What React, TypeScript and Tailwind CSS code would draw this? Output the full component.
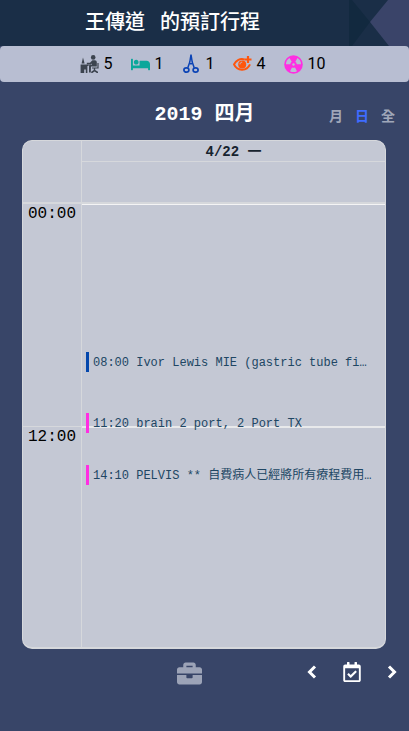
import type { ReactNode } from "react";
import { FaBed, FaBriefcase, FaRegCalendarCheck } from "react-icons/fa";

const MONO = "font-['Liberation_Mono','Noto_Sans_CJK_TC',monospace]";

function ClinicIcon() {
  return (
    <svg width="19" height="19" viewBox="0 0 19 19" fill="currentColor" aria-hidden="true">
      <circle cx="13.2" cy="2.4" r="2.3" />
      <path d="M12.4 5.2h2.4c1.2 0 2 .8 2 2v4.4H11l-.2 5.8H9V11c0-.8.5-1.3 1.2-1.3h1.6V8.4L10.600 9.400H6.800V7.800H10z" />
      <path d="M.6 9.400h8v1.500H7.400V18H5.800v-3.400H4.200V18H.6z" />
      <path d="M1.600 8.600 3 2.600l1.600 6z" />
      <path d="M17.400 8h1.200v5.400h-3.400V15l2.800 1.800V18h-1.200l-2.200-1.400L12.400 18h-1.200v-1.200L13.800 15v-1.600H12v-1h5.400z" />
    </svg>
  );
}

function ScissorsIcon() {
  return (
    <svg width="16" height="20" viewBox="0 0 16 20" fill="none" stroke="currentColor" aria-hidden="true">
      <path d="M8 .5 6.800 8l-2 5.800M8 .5 9.200 8l2 5.800M7 9.800h2" strokeWidth="1.500" />
      <ellipse cx="3.400" cy="16" rx="2.500" ry="2.200" strokeWidth="1.700" />
      <ellipse cx="12.600" cy="16" rx="2.500" ry="2.200" strokeWidth="1.700" />
    </svg>
  );
}

function EyePlusIcon() {
  return (
    <svg width="19" height="16" viewBox="0 0 19 16" fill="none" stroke="currentColor" aria-hidden="true">
      <path d="M11.600 3.600C7.200 2 3 4.400 1 8.400c3 6.600 12.600 7.400 16 0" strokeWidth="2" />
      <circle cx="9.200" cy="8.400" r="4" fill="currentColor" stroke="none" />
      <path d="M7 8.400c0-1.400.9-2.200 2.200-2.200" stroke="#b8bed2" strokeWidth="1" />
      <path d="M15 0v7M11.500 3.500h7" strokeWidth="2.200" />
    </svg>
  );
}

function RadiationIcon() {
  return (
    <svg width="19" height="19" viewBox="0 0 19 19" aria-hidden="true">
      <circle cx="9.500" cy="9.500" r="9.300" fill="currentColor" />
      <g fill="#b8bed2">
        <path id="blade" d="M8 12.400 6 16.200a7.600 7.600 0 0 0 7 0l-2-3.800a3.200 3.200 0 0 1-3 0z" />
        <use href="#blade" transform="rotate(120 9.5 9.5)" />
        <use href="#blade" transform="rotate(240 9.5 9.5)" />
        <circle cx="9.500" cy="9.500" r="1.200" />
      </g>
    </svg>
  );
}

function Chevron({ flip = false }: { flip?: boolean }) {
  return (
    <svg width="10" height="14" viewBox="0 0 10 14" fill="none" stroke="currentColor" strokeWidth="3" aria-hidden="true">
      <path d={flip ? "M2 1.500 7.500 7 2 12.500" : "M8 1.500 2.500 7 8 12.500"} />
    </svg>
  );
}

const counts: { name: string; value: number; color: string; icon: ReactNode }[] = [
  { name: "clinic", value: 5, color: "text-[#3c444f]", icon: <ClinicIcon /> },
  { name: "ward", value: 1, color: "text-[#0aa79b]", icon: <FaBed size={19} /> },
  { name: "surgery", value: 1, color: "text-[#0b43b5]", icon: <ScissorsIcon /> },
  { name: "exam", value: 4, color: "text-[#ff560d]", icon: <EyePlusIcon /> },
  { name: "radiology", value: 10, color: "text-[#ff2ee2]", icon: <RadiationIcon /> },
];

const events = [
  { time: "08:00", minutes: 480, title: "Ivor Lewis MIE (gastric tube fi…", bar: "border-[#0447ac]" },
  { time: "11:20", minutes: 680, title: "brain 2 port, 2 Port TX", bar: "border-[#ff2ee2]" },
  { time: "14:10", minutes: 850, title: "PELVIS ** 自費病人已經將所有療程費用…", bar: "border-[#ff2ee2]" },
];

const views = [
  { label: "月", active: false },
  { label: "日", active: true },
  { label: "全", active: false },
];

function Header() {
  return (
    <header className="relative flex h-[46px] items-center justify-center bg-[#1a2e47] pr-16">
      <svg className="absolute top-0 right-0" width="60" height="46" viewBox="0 0 60 46" aria-hidden="true">
        <path d="M0 0h3l18 22L3 46H0z" fill="#12293f" />
        <path d="M39 0h21v46H40L21 22z" fill="#3a4469" />
      </svg>
      <h1 className="relative flex gap-[15px] pb-1 text-xl leading-7 font-medium text-white">
        <span>王傳道</span>
        <span>的預訂行程</span>
      </h1>
    </header>
  );
}

function Summary() {
  return (
    <ul className="flex h-9 items-center justify-center gap-[18px] rounded bg-[#b8bed2] pr-1 font-[Roboto,sans-serif] text-base text-black">
      {counts.map((c) => (
        <li key={c.name} className="flex items-center gap-[5px]">
          <span className={`flex w-[19px] justify-center ${c.color}`}>{c.icon}</span>
          <span>{c.value}</span>
        </li>
      ))}
    </ul>
  );
}

function DayCalendar() {
  return (
    <section className={`mr-[23px] ml-[22px] overflow-hidden rounded-[10px] border border-b-2 border-[#d6d8dc] bg-[#c4c8d4] ${MONO}`}>
      <div className="grid h-[63px] grid-cols-[59px_1fr] border-b-2 border-[#d6d8dc]">
        <div className="border-r border-[#d6d8dc]" />
        <div>
          <h3 className="h-[21px] border-b border-[#d6d8dc] text-center text-sm leading-[22px] font-bold text-[#17232e]">
            4/22 一
          </h3>
        </div>
      </div>
      <div className="grid h-[443px] grid-cols-[59px_1fr]">
        <div className="grid grid-rows-2 border-r border-[#d6d8dc] text-center text-base leading-5 text-black">
          <div>00:00</div>
          <div className="border-t border-[#d6d8dc]">12:00</div>
        </div>
        <div className="relative grid grid-rows-2">
          <div className="border-t border-[#f4f4f5]" />
          <div className="border-t-2 border-[#e8e9eb]" />
          {events.map((e) => (
            <button
              key={e.time}
              type="button"
              style={{ top: `${(e.minutes / 1440) * 100}%` }}
              className={`absolute right-2 left-1 h-5 truncate border-l-3 pl-1 text-left text-xs leading-[22px] text-[#204663] ${e.bar}`}
            >
              {e.time} {e.title}
            </button>
          ))}
        </div>
      </div>
    </section>
  );
}

function Footer() {
  return (
    <footer className="grid grid-cols-[1fr_auto_1fr] items-center px-3 pt-3">
      <span />
      <button type="button" aria-label="Briefcase" className="mr-[30px] text-[#9ca3b7]">
        <FaBriefcase size={25} />
      </button>
      <div className="flex items-center justify-end gap-[25px] pb-1 text-white">
        <button type="button" aria-label="Previous day">
          <Chevron />
        </button>
        <button type="button" aria-label="Today">
          <FaRegCalendarCheck size={20} />
        </button>
        <button type="button" aria-label="Next day">
          <Chevron flip />
        </button>
      </div>
    </footer>
  );
}

export default function App() {
  return (
    <main className="min-h-screen bg-[#384568] font-['Noto_Sans_CJK_TC',sans-serif]">
      <Header />
      <Summary />
      <div className="grid h-[58px] grid-cols-[1fr_auto_1fr] items-center px-3.5 pt-2">
        <span />
        <h2 className={`text-xl leading-7 font-bold text-white ${MONO}`}>2019 四月</h2>
        <div className="flex justify-end gap-3 text-sm leading-5 font-bold text-[#a0a7b9]">
          {views.map((v) => (
            <button key={v.label} type="button" aria-pressed={v.active} className={v.active ? "text-[#3f6cff]" : ""}>
              {v.label}
            </button>
          ))}
        </div>
      </div>
      <DayCalendar />
      <Footer />
    </main>
  );
}
